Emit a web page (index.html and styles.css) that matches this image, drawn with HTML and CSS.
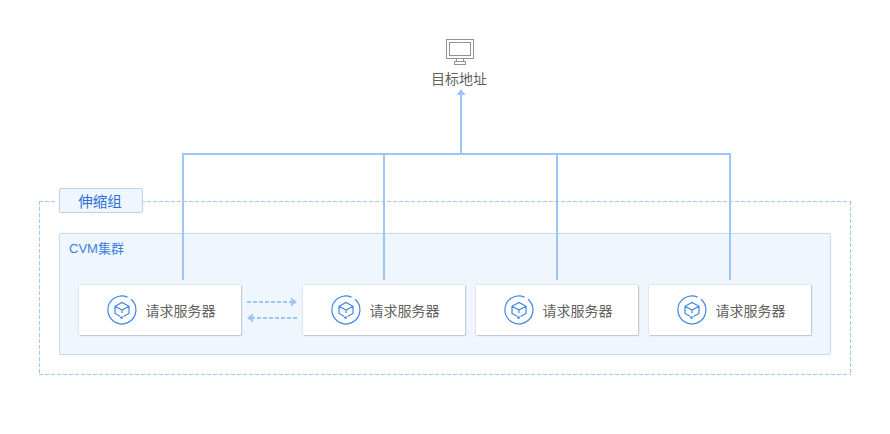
FILE: index.html
```html
<!DOCTYPE html>
<html lang="zh">
<head>
<meta charset="utf-8">
<title>伸缩组</title>
<link rel="stylesheet" href="styles.css">
</head>
<body>
<main class="diagram">
  <section class="target">
    <svg class="monitor" width="28" height="26" viewBox="0 0 28 26" fill="none" stroke="#8f939c" stroke-width="1">
      <rect x="0.5" y="0.5" width="27" height="19"/>
      <rect x="3.5" y="3.5" width="21" height="13"/>
      <path d="M10.5 19.5v3.5M17.5 19.5v3.5"/>
      <rect x="8.5" y="22.5" width="11" height="3"/>
    </svg>
    <div class="target-label">目标地址</div>
  </section>

  <section class="group">
    <div class="group-tag">伸缩组</div>
    <div class="cluster">
      <div class="cluster-title">CVM集群</div>
      <div class="servers">
        <div class="server">
          <svg class="server-icon" width="30" height="30" viewBox="0 0 30 30"><use href="#srv"/></svg>
          <span class="server-name">请求服务器</span>
        </div>
        <div class="links">
          <svg width="50" height="10" viewBox="0 0 50 10"><path class="dash" d="M0 5H44"/><path class="head" d="M44 .5l6 4.5-6 4.5z"/></svg>
          <svg width="50" height="10" viewBox="0 0 50 10"><path class="dash" d="M50 5H6"/><path class="head" d="M6 .5L0 5l6 4.5z"/></svg>
        </div>
        <div class="server">
          <svg class="server-icon" width="30" height="30" viewBox="0 0 30 30"><use href="#srv"/></svg>
          <span class="server-name">请求服务器</span>
        </div>
        <div class="server">
          <svg class="server-icon" width="30" height="30" viewBox="0 0 30 30"><use href="#srv"/></svg>
          <span class="server-name">请求服务器</span>
        </div>
        <div class="server">
          <svg class="server-icon" width="30" height="30" viewBox="0 0 30 30"><use href="#srv"/></svg>
          <span class="server-name">请求服务器</span>
        </div>
      </div>
    </div>
  </section>

  <svg class="wires" width="890" height="434" viewBox="0 0 890 434">
    <path d="M183 280V154H730V280M384 154V280M557 154V280M461 154V94"/>
    <path class="wire-head" d="M461 89l4.5 6h-9z"/>
  </svg>

  <svg width="0" height="0" class="defs">
    <defs>
      <g id="srv" fill="none" stroke="#3d87e6" stroke-width="1.2">
        <path d="M20.5 2.1A14 14 0 1 0 24 4.3"/>
        <path d="M13 21.2L8 18.5v-7.2l7-3.8 7 3.8v7.2l-5.5 3M8 11.3l7 3.8 7-3.8M15 15.1v3"/>
        <circle cx="14.5" cy="22.6" r="1.3" fill="#3d87e6" stroke="none"/>
      </g>
    </defs>
  </svg>
</main>
</body>
</html>
```

FILE: styles.css
```css
* { box-sizing: border-box; }
html, body { margin: 0; background: #fff; }
body {
  font-family: "Noto Sans CJK SC", "Liberation Sans", sans-serif;
  overflow: hidden;
}
.diagram {
  position: relative;
  width: 890px;
  height: 434px;
  padding: 39px 39px 0;
}
.target {
  display: flex;
  flex-direction: column;
  align-items: center;
  width: 840px;
  height: 162px;
}
.monitor { display: block; margin-left: 2px; }
.target-label {
  margin-top: 3px;
  font-size: 14px;
  line-height: 20px;
  color: #616161;
}
.group {
  position: relative;
  width: 812px;
  height: 174px;
  padding: 32px 20px 0;
  background:
    linear-gradient(to right, #9cc8f8 4px, transparent 4px) repeat-x 0 0 / 6px 1px,
    linear-gradient(to right, #9cc8f8 4px, transparent 4px) repeat-x 0 100% / 6px 1px,
    linear-gradient(to bottom, #9cc8f8 4px, transparent 4px) repeat-y 0 0 / 1px 6px,
    linear-gradient(to bottom, #9cc8f8 4px, transparent 4px) repeat-y 100% 0 / 1px 6px;
}
.group-tag {
  position: absolute;
  left: 20px;
  top: -13px;
  width: 84px;
  height: 25px;
  padding-right: 2px;
  background: #f0f6fe;
  border: 1px solid #b5d3f9;
  border-radius: 2px;
  box-shadow: -2px 0 0 #fff;
  color: #2a6fd8;
  font-size: 14.5px;
  line-height: 23px;
  text-align: center;
}
.cluster {
  width: 772px;
  height: 122px;
  background: #f0f6fe;
  border: 1px solid #c0daf9;
  border-radius: 2px;
  padding: 5px 19px 0;
}
.cluster-title {
  margin-left: -10px;
  font-family: "Liberation Sans", "Noto Sans CJK SC", sans-serif;
  font-size: 13px;
  line-height: 20px;
  color: #3d7fe0;
}
.servers {
  display: flex;
  align-items: stretch;
  margin-top: 26px;
  height: 50px;
}
.server {
  flex: none;
  display: flex;
  align-items: center;
  gap: 8.5px;
  width: 162px;
  padding-left: 28px;
  background: #fff;
  box-shadow: 1px 1px 1px rgba(0, 0, 0, 0.12), 0 0 2px rgba(0, 0, 0, 0.2);
}
.server + .server { margin-left: 11px; }
.links + .server { margin-left: 0; }
.server-icon { flex: none; }
.server-name {
  font-size: 14px;
  line-height: 20px;
  color: #616161;
}
.links {
  flex: none;
  width: 62px;
  display: flex;
  flex-direction: column;
  align-items: flex-start;
  gap: 6px;
  padding: 12px 0 0 6px;
}
.links svg { display: block; }
.dash { fill: none; stroke: #a0c6f4; stroke-width: 2; stroke-dasharray: 4 2; }
.head { fill: #a0c6f4; }
.wires {
  position: absolute;
  left: 0;
  top: 0;
  pointer-events: none;
  fill: none;
  stroke: #9dc5f5;
  stroke-width: 2;
}
.wire-head { fill: #9dc5f5; stroke: none; }
.defs { position: absolute; }
```
